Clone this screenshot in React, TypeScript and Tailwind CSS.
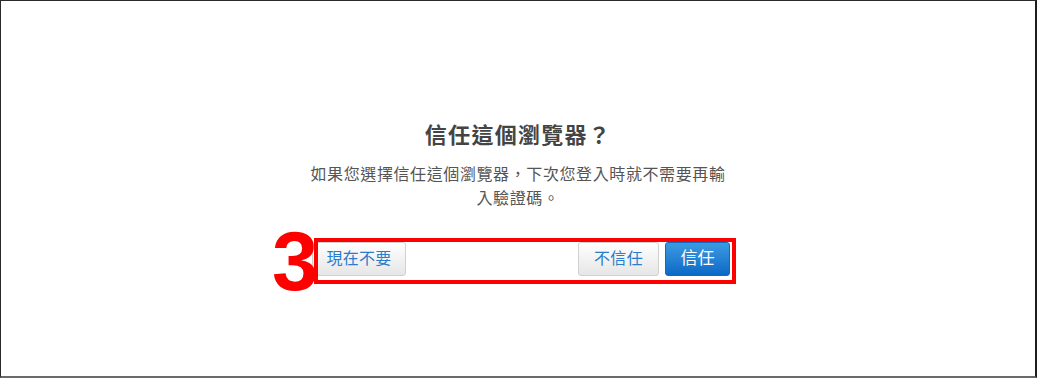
import React from 'react';

const cjk = { fontFamily: '"Liberation Sans", "Noto Sans CJK TC", sans-serif' };

export default function App() {
  return (
    <div
      className="relative h-[378px] w-full overflow-hidden bg-white border-t border-l border-r-2 border-b-2 border-t-[#2a2a2a] border-l-[#2a2a2a] border-r-[#1e1e1e] border-b-[#6a6a6a]"
      style={cjk}
    >
      <div className="flex flex-col items-center pt-[120px]">
        {/* Title */}
        <h1 className="text-[22px] leading-[30px] font-bold text-[#444] tracking-[1.3px]">信任這個瀏覽器？</h1>

        {/* Description */}
        <p className="mt-[12px] w-[420px] text-center text-[16px] leading-[24px] text-[#555] tracking-[0.6px]">
          如果您選擇信任這個瀏覽器，下次您登入時就不需要再輸入驗證碼。
        </p>

        {/* Buttons */}
        <div className="mt-[31px] flex w-[418px] translate-x-[3px] items-center justify-between">
          <button className="h-[34px] w-[94px] rounded-[3px] border border-[#d0d0d0] bg-gradient-to-b from-white to-[#e6e6e6] text-[16px] tracking-[0.3px] text-[#2a7ccc]">
            現在不要
          </button>
          <div className="flex gap-[6px]">
            <button className="h-[34px] w-[81px] rounded-[3px] border border-[#d0d0d0] bg-gradient-to-b from-white to-[#e6e6e6] text-[16px] tracking-[0.3px] text-[#2a7ccc]">
              不信任
            </button>
            <button className="h-[34px] w-[65px] rounded-[3px] border border-[#0f6bc0] bg-gradient-to-b from-[#3c9ae2] to-[#0a69c6] text-[17px] text-white">
              信任
            </button>
          </div>
        </div>
      </div>

      {/* Annotation overlay */}
      <div className="pointer-events-none absolute left-[313px] top-[237px] h-[46px] w-[422px] border-[4px] border-[#ff0000]" />
      <div
        className="pointer-events-none absolute left-[271px] top-[219px] text-[83px] font-bold leading-none text-[#ff0000]"
        style={{ fontFamily: '"Liberation Sans", sans-serif' }}
      >
        3
      </div>
    </div>
  );
}
